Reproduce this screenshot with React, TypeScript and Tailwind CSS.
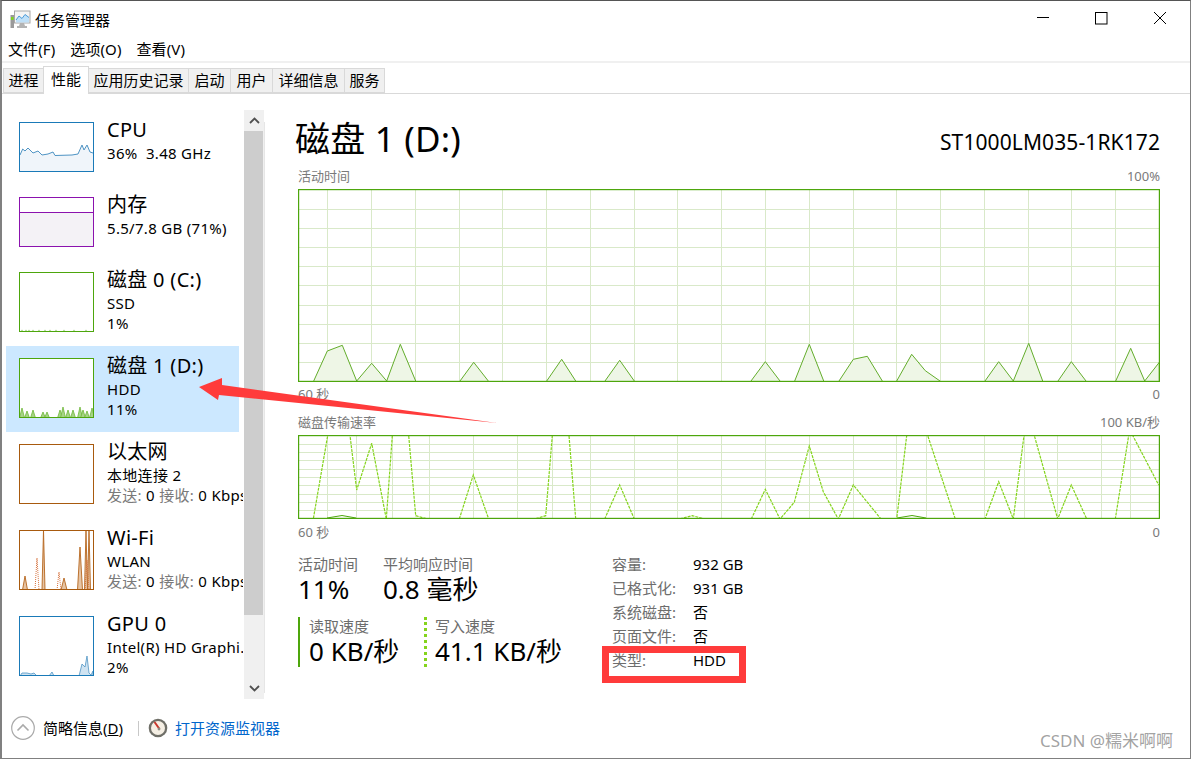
type Pt = [number, number]

// 活动时间 graph, page coordinates
const activityPeaks: Pt[][] = [
  [[313.7, 381], [327.3, 351], [342.3, 345.3], [356.7, 381], [371.7, 363.3], [386.7, 381], [400.3, 344.3], [415.7, 381]],
  [[460, 381], [473.7, 362.3], [488.3, 381]],
  [[546.7, 381], [561.7, 359.3], [575.7, 381]],
  [[605, 381], [619.7, 360.3], [634.3, 381]],
  [[751, 381], [765.3, 361.7], [780, 381]],
  [[794.7, 381], [809.3, 344.3], [823.7, 381]],
  [[839, 381], [853.3, 359.3], [867.3, 356.3], [882.3, 381]],
  [[896.7, 381], [911.7, 354.3], [925.3, 370.7], [940, 381]],
  [[985, 381], [998.7, 361.7], [1013.3, 381], [1028.7, 343.3], [1042.7, 381]],
  [[1058, 381], [1071.3, 361.7], [1086, 381]],
  [[1115.7, 381], [1130.7, 348.3], [1144.7, 381], [1159.3, 362.3], [1159.3, 381]],
]
const activityV = [327, 371, 415, 459, 502, 546, 590, 634, 677, 721, 765, 809, 853, 896, 940, 984, 1028, 1071, 1115]
const activityH = [209, 228, 247, 266, 285, 305, 324, 343, 362]

// 磁盘传输速率 graph
const writeLine: Pt[] = [
  [298, 519], [313.3, 519], [327.7, 435.5], [350, 435.5], [356.7, 490], [371.7, 443.3], [386.3, 519], [392.3, 435.5],
  [408.7, 435.5], [415.7, 515.7], [427.7, 519], [459.3, 519], [473.3, 475], [488.7, 519], [534.3, 519], [545.7, 515.7],
  [552.3, 435.5], [569, 435.5], [575.7, 519], [604.7, 519], [619.7, 485], [634.3, 519], [679.3, 519], [692.3, 515.7],
  [705, 519], [751.3, 519], [765.3, 489.3], [780, 519], [794.3, 502.3], [809.3, 446], [823.3, 491.7], [838.3, 519],
  [853.3, 485], [881, 519], [896.7, 519], [906.7, 435.5], [927.7, 435.5], [955.3, 519], [985, 519], [998.7, 481.7],
  [1013.3, 519], [1024, 435.5], [1034.3, 435.5], [1057.7, 519], [1071.3, 485], [1086.7, 519], [1115.3, 519],
  [1128.7, 435.5], [1132.7, 435.5], [1158.7, 485],
]
const transferV = [327, 356, 392, 429, 473, 517, 552, 590, 634, 677, 721, 765, 809, 853, 896, 926, 984, 1024, 1057, 1101, 1130]
const transferH = [444, 452, 460, 469, 477, 485, 494, 502, 510]

const pts = (p: Pt[]) => p.map(([x, y]) => `${x},${y}`).join(' ')

function Grid({ top, height, v, h, children }: { top: number; height: number; v: number[]; h: number[]; children: React.ReactNode }) {
  return (
    <svg width={862} height={height} viewBox={`298 ${top} 862 ${height}`} className="block shrink-0">
      {v.map((x) => <line key={x} x1={x + 0.5} x2={x + 0.5} y1={top} y2={top + height} stroke="#d9e9c9" strokeWidth={1} />)}
      {h.map((y) => <line key={y} x1={298} x2={1160} y1={y + 0.5} y2={y + 0.5} stroke="#d9e9c9" strokeWidth={1} />)}
      {children}
      <rect x={298.5} y={top + 0.5} width={861} height={height - 1} fill="none" stroke="#4da60c" strokeWidth={1.4} />
    </svg>
  )
}

function Thumb({ color, h, children }: { color: string; h: number; children?: React.ReactNode }) {
  return (
    <svg width={75} height={h} viewBox={`0 0 75 ${h}`} className="block shrink-0 bg-white">
      {children}
      <rect x={0.5} y={0.5} width={74} height={h - 1} fill="none" stroke={color} strokeWidth={1} />
    </svg>
  )
}

const spike = (x: number, height: number, w: number, base = 60) => `${x - w},${base} ${x},${base - height} ${x + w},${base}`

function SideItem({ thumb, title, lines, active }: { thumb: React.ReactNode; title: string; lines: React.ReactNode[]; active?: boolean }) {
  return (
    <div className={`ml-[6px] w-[233px] flex items-start gap-[13px] pl-[13px] pt-[12px] ${lines.length > 1 ? 'h-[86px]' : 'h-[75px]'} ${active ? 'bg-[#cce8ff]' : ''}`}>
      {thumb}
      <div className="w-[140px] shrink-0 -mt-[4px] whitespace-nowrap text-black">
        <div className="text-[20px] leading-[24px] tracking-[0.3px]">{title}</div>
        <div className="mt-[1px]">
          {lines.map((line, i) => <div key={i} className="text-[15px] leading-[20px] tracking-[0.3px]">{line}</div>)}
        </div>
      </div>
    </div>
  )
}

const Rate = () => (
  <>
    <span className="text-[#7a7a7a]">发送:</span> 0 <span className="text-[#7a7a7a]">接收:</span> 0 Kbps
  </>
)

function Stat({ label, value, className }: { label: string; value: string; className?: string }) {
  return (
    <div className={className}>
      <div className="text-[15px] leading-[18px] text-[#6d6d6d] whitespace-nowrap">{label}</div>
      <div className="text-[26px] leading-[32px] text-black whitespace-nowrap">{value}</div>
    </div>
  )
}

const specs = [
  ['容量:', '932 GB'],
  ['已格式化:', '931 GB'],
  ['系统磁盘:', '否'],
  ['页面文件:', '否'],
  ['类型:', 'HDD'],
]

const tabs = ['进程', '性能', '应用历史记录', '启动', '用户', '详细信息', '服务']
const tabWidths = ['w-[41px]', 'w-[46px]', 'w-[101px]', 'w-[43px]', 'w-[43px]', 'w-[73px]', 'w-[41px]']

export default function App() {
  return (
    <div className="relative w-[1191px] h-[760px] bg-white overflow-hidden font-['Noto_Sans','Noto_Sans_CJK_SC',sans-serif] text-black">
      <div className="h-[759px] flex flex-col border-t border-[#555555] border-l-2 border-l-[#808080] border-r border-r-[#808080] border-b border-b-[#808080]">
        {/* title bar */}
        <div className="h-[37px] flex items-center shrink-0 pl-[8px]">
          <svg width={21} height={19} viewBox="0 0 21 19" className="shrink-0">
            <rect x={0.5} y={5} width={3.5} height={13} fill="#9a9a9a" />
            <rect x={1} y={7} width={2.5} height={3} fill="#7ed321" />
            <rect x={4.5} y={1} width={15.5} height={12} fill="#f4f4f4" stroke="#a8a8a8" />
            <path d="M6 10 L9 6 L12 8.5 L15 4.5 L19 7.5 V12.5 H6 Z" fill="#bfe0f8" />
            <path d="M6 10 L9 6 L12 8.5 L15 4.5 L19 7.5" fill="none" stroke="#4a9ad8" strokeWidth={1} />
            <path d="M10 13 H14 L15 16 H17 V18 H7 V16 H9 Z" fill="#b4b4b4" />
          </svg>
          <span className="ml-[4px] text-[15px] leading-[20px]">任务管理器</span>
          <div className="ml-auto flex items-center">
            <svg width={132} height={16} viewBox="0 0 132 16" className="mr-[22px]">
              <line x1={1} x2={13} y1={5.5} y2={5.5} stroke="#000" />
              <rect x={59.5} y={0.5} width={11.5} height={11.5} fill="none" stroke="#000" />
              <path d="M118 0 L130 12 M130 0 L118 12" stroke="#000" fill="none" />
            </svg>
          </div>
        </div>

        {/* menu */}
        <div className="h-[23px] flex items-center gap-[15px] pl-[6px] text-[15px] tracking-[0.1px] shrink-0">
          <span>文件(F)</span>
          <span>选项(O)</span>
          <span>查看(V)</span>
        </div>
        <div className="h-[2px] bg-[#f0f0f0] shrink-0" />

        {/* tabs */}
        <div className="h-[31px] flex items-end pl-[1px] border-b border-[#d9d9d9] shrink-0">
          {tabs.map((tab, i) => (
            <div
              key={tab}
              className={`${tabWidths[i]} flex items-center justify-center text-[15px] border border-[#d9d9d9] -ml-px first:ml-0 ${
                tab === '性能' ? 'relative h-[28px] -mb-px bg-white border-b-0 pb-[3px]' : 'h-[25px] bg-[#f0f0f0]'
              }`}
            >
              {tab}
            </div>
          ))}
        </div>

        {/* body */}
        <div className="flex flex-1 min-h-0">
          <div className="w-[262px] shrink-0 flex pt-[16px] relative">
            <div className="w-[241px] overflow-hidden shrink-0">
              <div className="-ml-[2px] flex flex-col">
                <SideItem
                  title="CPU"
                  lines={['36%\u00a0\u00a03.48 GHz']}
                  thumb={
                    <Thumb color="#1a7ab8" h={50}>
                      <polygon points="1,33 3.7,27 6,29 9,26 14,31 19,29 23,33 29,32 34,30 36,33.5 53,33 59,32 63,23 65,28 68,23 71,30 74,31 74,49 1,49" fill="#f0f5fa" />
                      <polyline points="1,33 3.7,27 6,29 9,26 14,31 19,29 23,33 29,32 34,30 36,33.5 53,33 59,32 63,23 65,28 68,23 71,30 74,31" fill="none" stroke="#4f94c4" strokeWidth={1} />
                    </Thumb>
                  }
                />
                <SideItem
                  title="内存"
                  lines={['5.5/7.8 GB (71%)']}
                  thumb={
                    <Thumb color="#8b12ae" h={50}>
                      <rect x={0} y={15} width={75} height={35} fill="#f4f2f6" />
                      <line x1={0} x2={75} y1={15.5} y2={15.5} stroke="#8b12ae" />
                    </Thumb>
                  }
                />
                <SideItem
                  title="磁盘 0 (C:)"
                  lines={['SSD', '1%']}
                  thumb={
                    <Thumb color="#4da60c" h={60}>
                      {[3, 7, 10, 14, 20, 26, 31, 37, 45, 55, 67].map((x) => (
                        <polygon key={x} points={spike(x, 2.5, 2)} fill="#a7d488" />
                      ))}
                    </Thumb>
                  }
                />
                <SideItem
                  active
                  title="磁盘 1 (D:)"
                  lines={['HDD', '11%']}
                  thumb={
                    <Thumb color="#4da60c" h={60}>
                      {[[3, 10], [8, 7], [14, 8], [24, 6], [28, 6], [41, 8], [44, 11], [49, 8], [54, 8], [61, 11], [64, 8], [68, 7], [73, 10]].map(([x, ht]) => (
                        <polygon key={x} points={spike(x, ht, 2.5)} fill="#a7d488" stroke="#6fb83a" strokeWidth={0.8} />
                      ))}
                    </Thumb>
                  }
                />
                <SideItem title="以太网" lines={['本地连接 2', <Rate key="r" />]} thumb={<Thumb color="#a85a0e" h={60} />} />
                <SideItem
                  title="Wi-Fi"
                  lines={['WLAN', <Rate key="r" />]}
                  thumb={
                    <Thumb color="#a85a0e" h={60}>
                      {[[6, 14, 2.5], [24.5, 60, 1.5], [45, 12, 3], [61, 43, 2.5], [67, 60, 1.5], [70, 60, 1.5]].map(([x, ht, w]) => (
                        <polygon key={x} points={spike(x, ht, w)} fill="#e6c4a4" stroke="#b5651d" strokeWidth={0.9} />
                      ))}
                      {[[18, 32], [40, 18], [68, 30]].map(([x, ht]) => (
                        <polyline key={x} points={spike(x, ht, 2)} fill="none" stroke="#d8703a" strokeWidth={1} strokeDasharray="1 1" />
                      ))}
                    </Thumb>
                  }
                />
                <SideItem
                  title="GPU 0"
                  lines={['Intel(R) HD Graphi.', '2%']}
                  thumb={
                    <Thumb color="#1a7ab8" h={60}>
                      <polygon points="1,60 3,57 8,57 12,58 15,57 18,60 30,60 33,56 35,60 60,60 63,48 66,51 68,40 70,57 72,59 74,55 74,60" fill="#cfe3f1" stroke="#4f94c4" strokeWidth={0.8} />
                    </Thumb>
                  }
                />
              </div>
            </div>

            {/* scrollbar */}
            <div className="absolute left-[242px] top-[16px] w-[20px] h-[589px] flex flex-col bg-[#f0f0f0]">
              <div className="h-[21px] flex items-center justify-center shrink-0">
                <svg width={11} height={7} viewBox="0 0 11 7">
                  <path d="M1 6 L5.5 1.5 L10 6" fill="none" stroke="#505050" strokeWidth={1.8} />
                </svg>
              </div>
              <div className="w-[19px] h-[484px] bg-[#cdcdcd] shrink-0" />
              <div className="mt-auto h-[21px] flex items-center justify-center shrink-0">
                <svg width={11} height={7} viewBox="0 0 11 7">
                  <path d="M1 1 L5.5 5.5 L10 1" fill="none" stroke="#505050" strokeWidth={1.8} />
                </svg>
              </div>
            </div>
            <div className="absolute left-[262px] top-[28px] w-px h-[571px] bg-[#e6e6e6]" />
          </div>

          {/* detail panel */}
          <div className="flex-1 min-w-0 pl-[34px] pr-[30px] pt-[23px] flex flex-col">
            <div className="h-[45px] flex items-center justify-between">
              <div className="-ml-[3px] -mt-[2px] text-[35px] leading-[45px] tracking-[0.2px] whitespace-nowrap">磁盘 1 (D:)</div>
              <div className="text-[21px] leading-[28px] mt-[4px] tracking-[0.1px] whitespace-nowrap">ST1000LM035-1RK172</div>
            </div>
            <div className="mt-[5px] h-[18px] flex justify-between text-[13px] leading-[18px] text-[#7a7a7a]">
              <span>活动时间</span>
              <span>100%</span>
            </div>
            <div className="mt-[4px]">
              <Grid top={189} height={193} v={activityV} h={activityH}>
                {activityPeaks.map((p, i) => (
                  <g key={i}>
                    <polygon points={pts(p)} fill="#eef6e6" />
                    <polyline points={pts(p)} fill="none" stroke="#63ad2b" strokeWidth={1} />
                  </g>
                ))}
              </Grid>
            </div>
            <div className="mt-[3px] h-[18px] flex justify-between text-[13px] leading-[18px] text-[#7a7a7a]">
              <span>60 秒</span>
              <span>0</span>
            </div>
            <div className="mt-[10px] h-[18px] flex justify-between text-[13px] leading-[18px] text-[#7a7a7a]">
              <span>磁盘传输速率</span>
              <span>100 KB/秒</span>
            </div>
            <div className="mt-[4px]">
              <Grid top={435} height={84} v={transferV} h={transferH}>
                <polyline points="327,518 342,515.5 356,518" fill="none" stroke="#4da60c" strokeWidth={1} />
                <polyline points="897,518 912,515.5 926,518" fill="none" stroke="#4da60c" strokeWidth={1} />
                <polyline points={pts(writeLine)} fill="none" stroke="#84d41c" strokeWidth={1.2} strokeDasharray="3 1" />
              </Grid>
            </div>
            <div className="mt-[4px] h-[18px] flex justify-between text-[13px] leading-[18px] text-[#7a7a7a]">
              <span>60 秒</span>
              <span>0</span>
            </div>

            <div className="mt-[14px] flex">
              <div className="w-[314px] shrink-0">
                <div className="flex">
                  <Stat label="活动时间" value="11%" className="w-[85px]" />
                  <Stat label="平均响应时间" value="0.8 毫秒" />
                </div>
                <div className="mt-[12px] flex">
                  <Stat label="读取速度" value="0 KB/秒" className="h-[50px] w-[126px] border-l-2 border-[#4da60c] pl-[9px]" />
                  <Stat label="写入速度" value="41.1 KB/秒" className="h-[50px] border-l-[3px] border-dotted border-[#84d41c] pl-[8px]" />
                </div>
              </div>
              <div className="-mt-[3px]">
                {specs.map(([k, val]) => (
                  <div key={k} className="h-[24px] flex items-center text-[15px] whitespace-nowrap">
                    <span className="w-[81px] text-[#6d6d6d]">{k}</span>
                    <span>{val}</span>
                  </div>
                ))}
              </div>
            </div>
          </div>
        </div>

        {/* footer */}
        <div className="h-[52px] shrink-0 flex items-center pl-[9px] pb-[8px]">
          <svg width={24} height={24} viewBox="0 0 24 24" className="shrink-0">
            <circle cx={12} cy={12} r={11.3} fill="#fff" stroke="#aaaaaa" strokeWidth={1.2} />
            <path d="M6.5 14.5 L12 9 L17.5 14.5" fill="none" stroke="#aaaaaa" strokeWidth={1.6} />
          </svg>
          <span className="ml-[8px] text-[15px] whitespace-nowrap">简略信息(<u>D</u>)</span>
          <div className="ml-[15px] w-px h-[15px] bg-[#c8c8c8]" />
          <svg width={20} height={20} viewBox="0 0 20 20" className="ml-[9px] shrink-0">
            <circle cx={10} cy={10} r={9.3} fill="#6f6f68" />
            <circle cx={10} cy={10} r={7} fill="#f5efe4" />
            <path d="M6.5 4 L11.5 11" stroke="#c8362b" strokeWidth={2} />
            <circle cx={11} cy={11} r={1.4} fill="#8a8a80" />
          </svg>
          <span className="ml-[7px] text-[15px] text-[#0066cc] whitespace-nowrap">打开资源监视器</span>
        </div>
      </div>

      {/* screenshot annotations */}
      <svg width={310} height={60} viewBox="195 372 310 60" className="absolute left-[195px] top-[372px]">
        <polygon points="199,387 222,378 222,385 497,423 219,395 218,400" fill="#ff3b3b" />
      </svg>
      <div className="absolute left-[602px] top-[646px] w-[144px] h-[37px] border-[7px] border-[#ff3b3b]" />
      <div className="absolute left-[1040px] top-[730px] text-[17px] leading-[22px] text-[#8a8a8a]/80 whitespace-nowrap">CSDN @糯米啊啊</div>
    </div>
  )
}
